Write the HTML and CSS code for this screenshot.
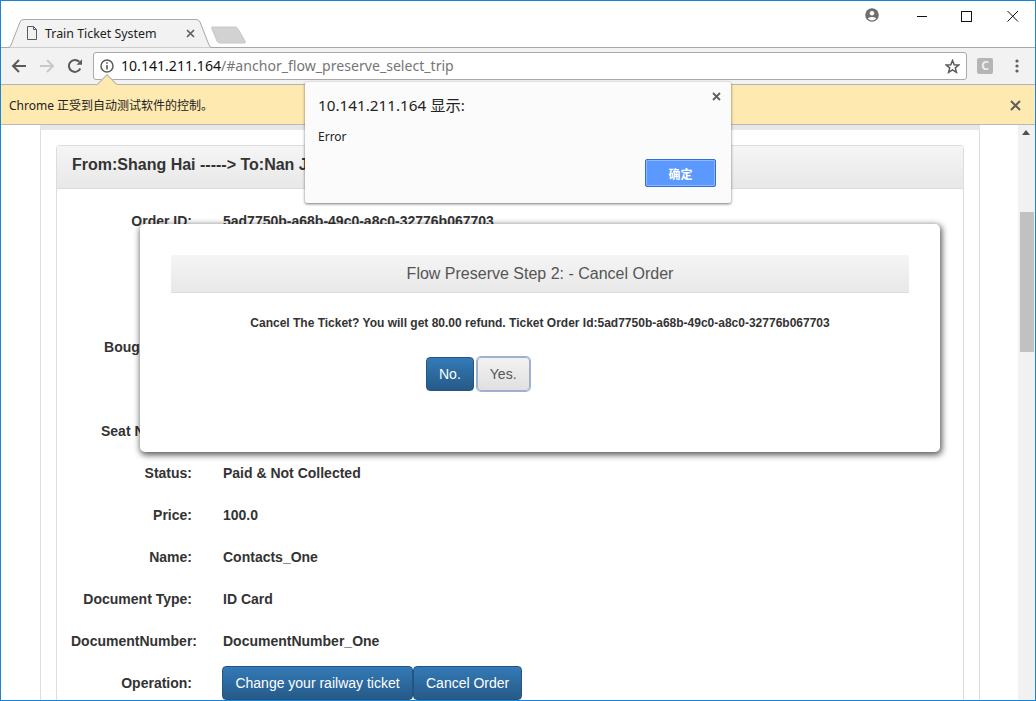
FILE: index.html
```html
<!DOCTYPE html>
<html lang="zh">
<head>
  <meta charset="UTF-8" />
  <title>Train Ticket System</title>
  <link rel="stylesheet" href="styles.css">
</head>
<body>
  <div class="titlebar">
    <div class="tab">
      <svg class="tab-shape" width="208" height="30" viewBox="0 0 208 30"><path d="M0 29.5 L2 29.5 Q4 29.5 5 27 L14 4 Q15 1.5 18 1.5 L190 1.5 Q193 1.5 194 4 L203 27 Q204 29.5 206 29.5 L208 29.5" fill="#f2f2f2" stroke="#a8a8a8"/></svg>
      <svg class="tab-doc" width="12" height="14" viewBox="0 0 12 14"><path d="M1.5 .5 H7.5 L10.5 3.5 V13.5 H1.5 Z M7.5 .5 V3.5 H10.5" fill="none" stroke="#5a5a5a"/></svg>
      <span class="tab-title">Train Ticket System</span>
      <svg class="tab-close" width="9" height="9" viewBox="0 0 9 9"><path d="M1 1 L8 8 M8 1 L1 8" stroke="#5f5f5f" stroke-width="1.7"/></svg>
    </div>
    <svg class="newtab" width="36" height="18" viewBox="0 0 36 18"><path d="M1 1 H24 Q26 1 27 3 L34 15 Q35 17 33 17 H9 Q7 17 6 15 L1 3 Q0 1 1 1 Z" fill="#d2d2d2" stroke="#c6c6c6"/></svg>
    <svg class="avatar" width="14" height="14" viewBox="0 0 14 14"><circle cx="7" cy="7" r="6.8" fill="#6e6e6e"/><circle cx="7" cy="5.2" r="2.3" fill="#fff"/><path d="M2.8 10.6 C4 8.6 10 8.6 11.2 10.6 C10 12 8.5 12.4 7 12.4 C5.5 12.4 4 12 2.8 10.6 Z" fill="#fff"/></svg>
    <div class="winbtns">
      <svg width="46" height="30" viewBox="0 0 46 30"><path d="M20 14.5 H30" stroke="#111"/></svg>
      <svg width="46" height="30" viewBox="0 0 46 30"><rect x="18.5" y="9.5" width="10" height="10" fill="none" stroke="#111"/></svg>
      <svg width="46" height="30" viewBox="0 0 46 30"><path d="M18.500 9 L29 19.500 M29 9 L18.500 19.500" stroke="#111"/></svg>
    </div>
  </div>

  <div class="toolbar">
    <svg class="navicon" width="16" height="16" viewBox="0 0 16 16"><path d="M15 8 H2 M8 2 L2 8 L8 14" fill="none" stroke="#5a5a5a" stroke-width="2"/></svg>
    <svg class="navicon" width="16" height="16" viewBox="0 0 16 16"><path d="M1 8 H14 M8 2 L14 8 L8 14" fill="none" stroke="#c9c9c9" stroke-width="2"/></svg>
    <svg class="navicon" width="16" height="16" viewBox="0 0 16 16"><path d="M13.300 10.500 A6 6 0 1 1 12.300 3.800" fill="none" stroke="#5a5a5a" stroke-width="2"/><path d="M9.500 6.800 H15 V1.300 Z" fill="#5a5a5a"/></svg>
    <div class="omnibox">
      <svg class="infoicon" width="14" height="14" viewBox="0 0 14 14"><circle cx="7" cy="7" r="6" fill="none" stroke="#5a5a5a" stroke-width="1.500"/><path d="M7 6 V10.500 M7 3.300 V4.800" stroke="#5a5a5a" stroke-width="1.600"/></svg>
      <span class="url"><span class="host">10.141.211.164</span>/#anchor_flow_preserve_select_trip</span>
      <svg class="star" width="15" height="15" viewBox="0 0 15 15"><path d="M7.500 1.500 L9.200 5.700 L13.800 6 L10.300 8.900 L11.400 13.300 L7.500 10.900 L3.600 13.300 L4.700 8.900 L1.200 6 L5.800 5.700 Z" fill="none" stroke="#5a5a5a" stroke-width="1.500"/></svg>
    </div>
    <span class="ext">C</span>
    <svg class="dots" width="4" height="14" viewBox="0 0 4 14"><circle cx="2" cy="2" r="1.600" fill="#5f5f5f"/><circle cx="2" cy="7" r="1.600" fill="#5f5f5f"/><circle cx="2" cy="12" r="1.600" fill="#5f5f5f"/></svg>
  </div>

  <div class="infobar">
    <span class="notch"></span>
    <span class="infotext">Chrome 正受到自动测试软件的控制。</span>
    <svg width="11" height="11" viewBox="0 0 11 11"><path d="M1 1 L10 10 M10 1 L1 10" stroke="#5f5f5f" stroke-width="2"/></svg>
  </div>

  <div class="viewport">
    <div class="page">
      <div class="well">
        <div class="panel">
          <div class="panel-head">From:Shang Hai -----&gt; To:Nan Jing</div>
          <div class="panel-body">
            <div class="row"><label>Order ID:</label><span>5ad7750b-a68b-49c0-a8c0-32776b067703</span></div>
            <div class="row"></div>
            <div class="row"></div>
            <div class="row"><label>Bought Date:</label></div>
            <div class="row"></div>
            <div class="row"><label>Seat Number:</label></div>
            <div class="row"><label>Status:</label><span>Paid &amp; Not Collected</span></div>
            <div class="row"><label>Price:</label><span>100.0</span></div>
            <div class="row"><label>Name:</label><span>Contacts_One</span></div>
            <div class="row"><label>Document Type:</label><span>ID Card</span></div>
            <div class="row"><label class="label-wide">DocumentNumber:</label><span>DocumentNumber_One</span></div>
            <div class="row"><label>Operation:</label>
              <div class="ops">
                <button class="btn btn-primary">Change your railway ticket</button>
                <button class="btn btn-primary">Cancel Order</button>
              </div>
            </div>
          </div>
        </div>
      </div>
    </div>
    <div class="scrollbar">
      <span class="arrow-up"></span>
      <span class="thumb"></span>
    </div>
  </div>

  <div class="modal">
    <div class="modal-title">Flow Preserve Step 2: - Cancel Order</div>
    <p class="modal-text">Cancel The Ticket? You will get 80.00 refund. Ticket Order Id:5ad7750b-a68b-49c0-a8c0-32776b067703</p>
    <div class="modal-btns">
      <button class="btn btn-primary">No.</button>
      <button class="btn btn-default">Yes.</button>
    </div>
  </div>

  <div class="alert">
    <svg class="alert-close" width="9" height="9" viewBox="0 0 9 9"><path d="M1 1 L8 8 M8 1 L1 8" stroke="#5f5f5f" stroke-width="1.800"/></svg>
    <div class="alert-title">10.141.211.164 显示:</div>
    <div class="alert-msg">Error</div>
    <div class="alert-foot"><button class="alert-ok">确定</button></div>
  </div>
</body>
</html>
```

FILE: styles.css
```css
html, body {
  margin: 0;
  height: 100%;
}
body {
  position: relative;
  box-sizing: border-box;
  width: 1036px;
  height: 701px;
  border: 1px solid #1883d7;
  overflow: hidden;
  display: flex;
  flex-direction: column;
  background: #fff;
  font-family: "Liberation Sans", Arial, sans-serif;
  font-size: 14px;
  color: #333;
}
svg {
  display: block;
  flex: none;
}

/* window title + tabs */
.titlebar {
  height: 47px;
  flex: none;
  box-sizing: border-box;
  padding-left: 5px;
  display: flex;
  align-items: flex-end;
  background: linear-gradient(#a8a8a8, #a8a8a8) bottom / 100% 1px no-repeat #fff;
}
.tab {
  position: relative;
  width: 208px;
  height: 30px;
  display: flex;
  align-items: center;
  box-sizing: border-box;
  padding: 0 0 0 20px;
}
.tab-shape {
  position: absolute;
  left: 0;
  top: 0;
}
.tab-doc, .tab-title, .tab-close {
  position: relative;
}
.tab-title {
  margin-left: 7px;
  width: 141px;
  font: 12.4px "Noto Sans", "Noto Sans CJK SC", sans-serif;
  color: #222;
  white-space: nowrap;
}
.newtab {
  margin: 0 0 4px -3px;
}
.avatar {
  margin: 0 0 26px auto;
}
.winbtns {
  display: flex;
  align-self: flex-start;
  margin-left: 18px;
  padding-top: 1px;
}

/* toolbar */
.toolbar {
  height: 36px;
  flex: none;
  box-sizing: border-box;
  background: #f2f2f2;
  display: flex;
  align-items: center;
  padding: 0 0 0 10px;
}
.navicon {
  margin-right: 12px;
}
.navicon:nth-child(3) {
  margin-right: 10px;
}
.omnibox {
  width: 874px;
  height: 28px;
  box-sizing: border-box;
  background: #fff;
  border: 1px solid #a9a9a9;
  border-radius: 3px;
  display: flex;
  align-items: center;
  padding: 0 6px 0 6px;
}
.infoicon {
  margin-right: 7px;
}
.url {
  flex: 1;
  padding-bottom: 2px;
  font: 14.1px "Noto Sans", sans-serif;
  color: #767676;
  white-space: nowrap;
}
.host {
  color: #111;
}
.ext {
  width: 16px;
  height: 16px;
  margin-left: 10px;
  border-radius: 2px;
  background: #b5b5b5;
  color: #eee;
  font: bold 12px/16px "Noto Sans", sans-serif;
  text-align: center;
}
.dots {
  margin-left: 22px;
}

/* automation warning */
.infobar {
  position: relative;
  height: 41px;
  flex: none;
  box-sizing: border-box;
  background: #fee9b0;
  border-top: 1px solid #b4b4b4;
  border-bottom: 1px solid #b9b9b9;
  display: flex;
  align-items: center;
  justify-content: space-between;
  padding: 1px 14px 0 8px;
}
.notch {
  position: absolute;
  left: 99px;
  top: -8px;
  width: 13px;
  height: 13px;
  background: #fee9b0;
  border-top: 1px solid #b4b4b4;
  border-left: 1px solid #b4b4b4;
  transform: rotate(45deg);
}
.infotext {
  font: 12px "Noto Sans", "Noto Sans CJK SC", sans-serif;
  color: #222;
}

/* page */
.viewport {
  flex: 1;
  min-height: 0;
  display: flex;
}
.page {
  flex: 1;
  overflow: hidden;
  padding: 0 38px 0 39px;
}
.well {
  border: 1px solid #ddd;
  border-top: 5px solid #e7e7e7;
  padding: 15px 15px 0;
}
.panel {
  border: 1px solid #ddd;
  border-radius: 4px 4px 0 0;
  border-bottom: 0;
}
.panel-head {
  height: 43px;
  box-sizing: border-box;
  padding: 8px 15px;
  background: linear-gradient(#f5f5f5, #e8e8e8);
  border-bottom: 1px solid #ddd;
  font-size: 16px;
  font-weight: bold;
  line-height: 22px;
}
.panel-body {
  padding-top: 11px;
}
.row {
  height: 42px;
  display: grid;
  grid-template-columns: 135px auto;
  column-gap: 30px;
  align-items: center;
  justify-content: start;
  font-weight: bold;
  line-height: 20px;
}
.row label {
  text-align: right;
  white-space: nowrap;
}
.row .label-wide {
  margin-right: -5px;
}
.row span {
  padding-left: 1px;
}
.ops {
  display: flex;
}
.ops .btn:first-child {
  min-width: 191px;
}
.ops .btn:last-child {
  min-width: 109px;
}
.btn {
  font-family: inherit;
  font-size: 14px;
  line-height: 20px;
  padding: 6px 12px;
  border: 1px solid transparent;
  border-radius: 4px;
  white-space: nowrap;
}
.btn-primary {
  color: #fff;
  background: linear-gradient(#337ab7, #265a88);
  border-color: #245580;
}
.btn-default {
  color: #333;
  background: linear-gradient(#fff, #e0e0e0);
  border-color: #ccc;
}

/* scrollbar */
.scrollbar {
  position: relative;
  width: 17px;
  flex: none;
  background: #f1f1f1;
}
.arrow-up {
  position: absolute;
  left: 4px;
  top: 5px;
  border: 4px solid transparent;
  border-top: 0;
  border-bottom: 5px solid #505050;
}
.thumb {
  position: absolute;
  left: 2px;
  right: 1px;
  top: 87px;
  height: 140px;
  background: #c1c1c1;
}

/* bootstrap modal on the page */
.modal {
  position: absolute;
  left: 139px;
  top: 223px;
  width: 800px;
  height: 228px;
  box-sizing: border-box;
  padding: 31px 31px 0;
  background: #fff;
  border-radius: 5px;
  box-shadow: 1px 2px 6px 1px rgba(0, 0, 0, .65);
}
.modal-title {
  height: 38px;
  box-sizing: border-box;
  background: linear-gradient(#f5f5f5, #e8e8e8);
  border-bottom: 1px solid #ddd;
  font-size: 16px;
  line-height: 37px;
  color: #555;
  text-align: center;
}
.modal-text {
  margin: 22px 0 0;
  font-size: 12px;
  font-weight: bold;
  line-height: 17px;
  text-align: center;
}
.modal-btns {
  display: flex;
  gap: 3px;
  margin-top: 25px;
  padding-left: 255px;
}
.modal-btns .btn-default {
  color: #555;
  background: linear-gradient(#f2f2f2, #e0e0e0);
  border-color: #adadad;
  box-shadow: 0 0 0 1px #8fb4ee;
}

/* native alert dialog */
.alert {
  position: absolute;
  left: 304px;
  top: 81px;
  width: 426px;
  height: 121px;
  box-sizing: border-box;
  padding: 12px 13px 0;
  background: #fbfbfb;
  border-radius: 2px;
  box-shadow: 0 1px 3px rgba(0, 0, 0, .55);
  font-family: "Noto Sans", "Noto Sans CJK SC", sans-serif;
  color: #222;
}
.alert-close {
  position: absolute;
  right: 10px;
  top: 10px;
}
.alert-title {
  font-size: 15.25px;
  line-height: 22px;
}
.alert-msg {
  margin-top: 12px;
  font-size: 12px;
  line-height: 17px;
}
.alert-foot {
  display: flex;
  justify-content: flex-end;
  margin: 14px 2px 0 0;
}
.alert-ok {
  width: 71px;
  height: 28px;
  padding: 0;
  background: #5b99ff;
  border: 1px solid #2f6fd6;
  border-radius: 2px;
  box-shadow: inset 0 0 0 1px #8db8ff;
  color: #fff;
  font: bold 12px "Noto Sans CJK SC", sans-serif;
}
```
